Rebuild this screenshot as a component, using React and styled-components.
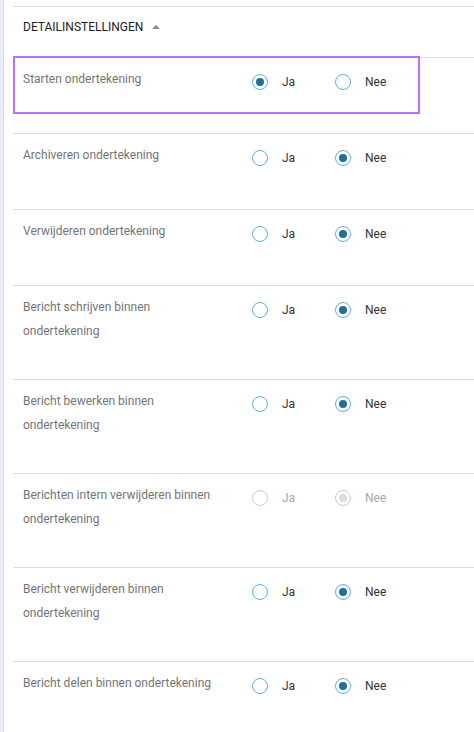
import React from "react";
import styled, { createGlobalStyle, css } from "styled-components";

const Global = createGlobalStyle`
  html, body { margin: 0; padding: 0; background: #fff; }
  body { font-family: Roboto, "Noto Sans", Arial, sans-serif; }
  * { box-sizing: border-box; }
`;

const Page = styled.div`
  display: flex;
  min-height: 732px;
  width: 474px;
  overflow: hidden;
`;

const SideStrip = styled.div`
  width: 4px;
  flex: none;
  background: #e9ebf5;
  border-right: 1px solid #d8dbe9;
`;

const Panel = styled.div`
  flex: 1;
  margin-left: 9px;
  margin-top: 6px;
  border-top: 1px solid #dedede;
`;

const Header = styled.div`
  display: flex;
  align-items: flex-start;
  gap: 9px;
  height: 50px;
  padding: 12px 0 0 10px;
  font-size: 12px;
  line-height: 16px;
  color: #222;
  text-transform: uppercase;
`;

const Caret = styled.span`
  margin-top: 6px;
  width: 0;
  height: 0;
  border-left: 4px solid transparent;
  border-right: 4px solid transparent;
  border-bottom: 4px solid #8a8a8a;
`;

const Row = styled.div`
  position: relative;
  display: grid;
  grid-template-columns: 229px auto;
  border-top: 1px solid #dedede;
  padding: 9px 0 36px 10px;
  ${(p) =>
    p.$focused &&
    css`
      &::after {
        content: "";
        position: absolute;
        left: 0;
        top: -2px;
        width: 403px;
        height: 54px;
        border: 2px solid #bd6ff6;
        pointer-events: none;
      }
    `}
`;

const Label = styled.div`
  min-height: 30px;
  max-width: 200px;
  font-size: 12px;
  line-height: 24px;
  color: #757575;
`;

const Options = styled.div`
  display: flex;
  align-items: flex-start;
  padding-top: 1px;
`;

const Option = styled.label`
  display: flex;
  align-items: center;
  gap: 14px;
  height: 28px;
  width: 83px;
  font-size: 12px;
  color: ${(p) => (p.$disabled ? "#a8a8a8" : "#333")};
`;

const Circle = styled.span`
  position: relative;
  width: 16px;
  height: 16px;
  border-radius: 50%;
  flex: none;
  border: 1px solid ${(p) => (p.$disabled ? "#c9c9c9" : "#5fb0e0")};
  ${(p) =>
    p.$checked &&
    css`
      &::after {
        content: "";
        position: absolute;
        left: 3px;
        top: 3px;
        width: 8px;
        height: 8px;
        border-radius: 50%;
        background: ${p.$disabled ? "#dcdcdc" : "#226f97"};
      }
    `}
`;

const rows = [
  { label: "Starten ondertekening", value: "ja", focused: true },
  { label: "Archiveren ondertekening", value: "nee" },
  { label: "Verwijderen ondertekening", value: "nee" },
  { label: "Bericht schrijven binnen ondertekening", value: "nee" },
  { label: "Bericht bewerken binnen ondertekening", value: "nee" },
  { label: "Berichten intern verwijderen binnen ondertekening", value: "nee", disabled: true },
  { label: "Bericht verwijderen binnen ondertekening", value: "nee" },
  { label: "Bericht delen binnen ondertekening", value: "nee" },
];

function Radio({ checked, disabled, children }) {
  return (
    <Option $disabled={disabled}>
      <Circle $checked={checked} $disabled={disabled} />
      {children}
    </Option>
  );
}

export default function App() {
  return (
    <>
      <Global />
      <Page>
        <SideStrip />
        <Panel>
          <Header>
            Detailinstellingen
            <Caret />
          </Header>
          {rows.map((r) => (
            <Row key={r.label} $focused={r.focused}>
              <Label>{r.label}</Label>
              <Options>
                <Radio checked={r.value === "ja"} disabled={r.disabled}>Ja</Radio>
                <Radio checked={r.value === "nee"} disabled={r.disabled}>Nee</Radio>
              </Options>
            </Row>
          ))}
        </Panel>
      </Page>
    </>
  );
}
